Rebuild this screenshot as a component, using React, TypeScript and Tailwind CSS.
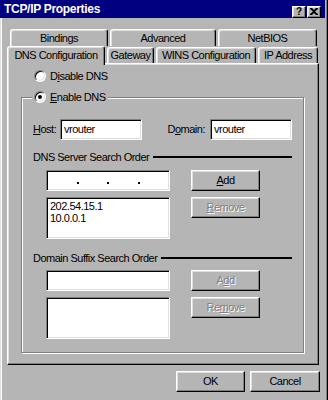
import React from 'react'

const raised =
  'border border-t-white border-l-white border-r-black border-b-black shadow-[inset_-1px_-1px_#808080,inset_1px_1px_#dfdfdf] bg-[#b5b5b5]'
const sunken =
  'border border-t-[#808080] border-l-[#808080] border-r-white border-b-white shadow-[inset_1px_1px_#000,inset_-1px_-1px_#dfdfdf]'
const disabled = 'text-[#808080] [text-shadow:1px_1px_#fff]'

function U({ children }: { children: React.ReactNode }) {
  return <span className="underline underline-offset-[1px]">{children}</span>
}

function Radio({ checked }: { checked?: boolean }) {
  return (
    <span className="w-[12px] h-[12px] rounded-full bg-white border border-t-[#808080] border-l-[#808080] border-r-white border-b-white shadow-[inset_1px_1px_#000,inset_-1px_-1px_#dfdfdf] flex items-center justify-center">
      {checked && <span className="w-[4px] h-[4px] rounded-full bg-black"></span>}
    </span>
  )
}

function Button({ children, off, w = 'w-[69px]' }: { children: React.ReactNode; off?: boolean; w?: string }) {
  return (
    <div className={`${raised} ${w} h-[21px] flex items-center justify-center ${off ? disabled : ''}`}>
      {children}
    </div>
  )
}

function Tab({ label, w, h = 'h-[17px]', sel }: { label: string; w: string; h?: string; sel?: boolean }) {
  return (
    <div
      className={`${w} ${h} rounded-t-[3px] border-t border-l border-r border-t-white border-l-white border-r-black shadow-[inset_-1px_0_#808080,inset_1px_1px_#dfdfdf] bg-[#b5b5b5] flex items-center justify-center ${
        sel ? 'relative z-10 mb-[-2px] pb-[2px]' : ''
      }`}
    >
      {label}
    </div>
  )
}

function Divider({ label }: { label: string }) {
  return (
    <div className="flex items-center h-[14px]">
      <span>{label}</span>
      <div className="flex-1 h-[2px] bg-black ml-[4px]"></div>
    </div>
  )
}

function Dot() {
  return (
    <span className="w-[4px] flex justify-center">
      <span className="w-[2px] h-[2px] bg-black mt-[4px]"></span>
    </span>
  )
}

export default function App() {
  return (
    <div className="w-[328px] h-[400px] overflow-hidden bg-[#b5b5b5] text-black text-[11px] tracking-[-0.5px] font-['Liberation_Sans',Arial,sans-serif] shadow-[inset_-1px_0_#000,inset_-2px_0_#808080,inset_1px_0_#dfdfdf,inset_2px_0_#fff]">
      {/* Title bar */}
      <div className="h-[18px] mr-[3px] bg-[#000080] flex items-center pl-[4px] pr-[4px]">
        <span className="text-white font-bold text-[12px] tracking-[-0.3px] flex-1">TCP/IP Properties</span>
        <div className="flex gap-[1px] mt-[5px]">
          <div className={`${raised} w-[14px] h-[12px] flex items-center justify-center text-black font-bold text-[10px] tracking-normal leading-none`}>
            ?
          </div>
          <div className={`${raised} w-[14px] h-[12px] flex items-center justify-center`}>
            <svg width="8" height="7" viewBox="0 0 8 7">
              <path d="M0 0h2l2 2 2-2h2v1L5 3.5 8 6v1H6L4 5 2 7H0V6l3-2.5L0 1z" fill="#000" />
            </svg>
          </div>
        </div>
      </div>

      {/* Tabs */}
      <div className="mt-[11px] pl-[10px] flex gap-[2px]">
        <Tab label="Bindings" w="w-[98px]" />
        <Tab label="Advanced" w="w-[106px]" />
        <Tab label="NetBIOS" w="w-[99px]" />
      </div>
      <div className="pl-[7px] flex items-end gap-[2px] h-[18px] mt-[-1px]">
        <Tab label="DNS Configuration" w="w-[98px]" h="h-[19px]" sel />
        <Tab label="Gateway" w="w-[47px]" h="h-[16px]" />
        <Tab label="WINS Configuration" w="w-[100px]" h="h-[16px]" />
        <Tab label="IP Address" w="w-[60px]" h="h-[16px]" />
      </div>

      {/* Panel */}
      <div className={`${raised} ml-[7px] w-[312px] pt-[5px] pb-[11px]`}>
        <div className="flex items-center gap-[4px] h-[14px] pl-[26px]">
          <Radio />
          <span>
            D<U>i</U>sable DNS
          </span>
        </div>

        <div className="mt-[14px] ml-[13px] w-[283px] border border-[#808080] shadow-[inset_1px_1px_#fff,1px_1px_#fff] px-[11px] pb-[13px]">
          <div className="mt-[-8px] ml-[-1px] w-fit px-[2px] bg-[#b5b5b5] flex items-center gap-[4px] h-[14px]">
            <Radio checked />
            <span>
              <U>E</U>nable DNS
            </span>
          </div>

          <div className="mt-[15px] flex items-center h-[21px]">
            <span className="w-[27px]">
              <U>H</U>ost:
            </span>
            <div className={`${sunken} w-[82px] h-[21px] bg-white flex items-center pl-[3px]`}>vrouter</div>
            <span className="flex-1 text-right pr-[5px]">
              D<U>o</U>main:
            </span>
            <div className={`${sunken} w-[82px] h-[21px] bg-white flex items-center pl-[3px]`}>vrouter</div>
          </div>

          <div className="mt-[10px]">
            <Divider label="DNS Server Search Order" />
          </div>

          <div className="mt-[6px] ml-[13px] flex gap-[21px]">
            <div className={`${sunken} w-[124px] h-[21px] bg-white flex items-center px-[2px]`}>
              <span className="flex-1"></span>
              <Dot />
              <span className="flex-1"></span>
              <Dot />
              <span className="flex-1"></span>
              <Dot />
              <span className="flex-1"></span>
            </div>
            <Button>
              <U>A</U>dd
            </Button>
          </div>

          <div className="mt-[6px] ml-[13px] flex gap-[21px] items-start">
            <div className={`${sunken} w-[124px] h-[42px] bg-white pl-[3px] pt-[2px] leading-[12px]`}>
              <div>202.54.15.1</div>
              <div>10.0.0.1</div>
            </div>
            <Button off>
              <U>R</U>emove
            </Button>
          </div>

          <div className="mt-[12px]">
            <Divider label="Domain Suffix Search Order" />
          </div>

          <div className="mt-[5px] ml-[13px] flex gap-[21px]">
            <div className={`${sunken} w-[124px] h-[21px] bg-white`}></div>
            <Button off>
              A<U>d</U>d
            </Button>
          </div>

          <div className="mt-[6px] ml-[13px] flex gap-[21px] items-start">
            <div className={`${sunken} w-[124px] h-[42px] bg-white`}></div>
            <Button off>
              Re<U>m</U>ove
            </Button>
          </div>
        </div>
      </div>

      {/* Footer buttons */}
      <div className="mt-[6px] flex justify-end gap-[5px] pr-[8px]">
        <Button>OK</Button>
        <Button w="w-[70px]">Cancel</Button>
      </div>
    </div>
  )
}
